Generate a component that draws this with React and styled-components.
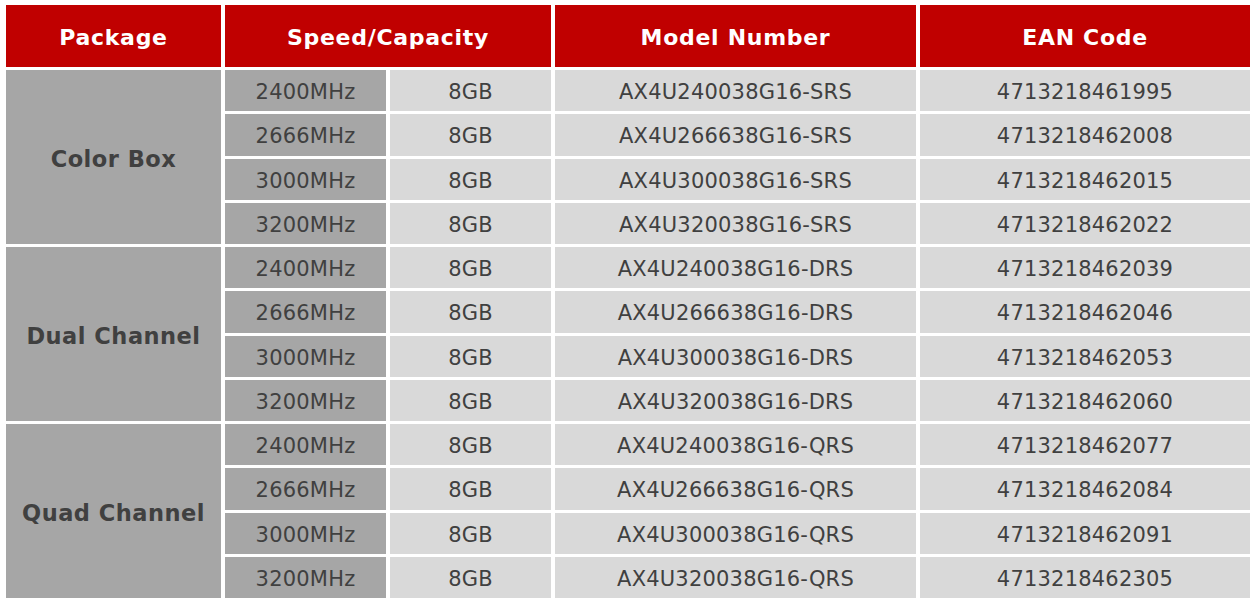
import { Fragment } from "react";
import styled, { createGlobalStyle } from "styled-components";

const GlobalStyle = createGlobalStyle`
  html, body {
    margin: 0;
    padding: 0;
    background: #ffffff;
  }
  body {
    font-family: "DejaVu Sans", Verdana, sans-serif;
  }
`;

const Table = styled.div`
  display: grid;
  grid-template-columns: 215px 161px 161px 361px 330px;
  grid-template-rows: 62px repeat(12, 41.25px);
  column-gap: 4px;
  row-gap: 3px;
  padding: 5px 0 0 6px;
  width: fit-content;
`;

const HeadCell = styled.div`
  grid-column: ${(props) => props.span || "auto"};
  background-color: #c00000;
  color: #ffffff;
  font-size: 22px;
  font-weight: bold;
  letter-spacing: 0.7px;
  display: flex;
  align-items: center;
  justify-content: center;
  padding-top: 2px;
`;

const GroupCell = styled.div`
  grid-row: span 4;
  background-color: #a6a6a6;
  color: #404040;
  font-size: 22.5px;
  font-weight: bold;
  letter-spacing: 0.5px;
  display: flex;
  align-items: center;
  justify-content: center;
  padding-top: 3px;
`;

const Cell = styled.div`
  background-color: ${(props) => (props.dark ? "#a6a6a6" : "#d9d9d9")};
  color: #404040;
  font-size: 21px;
  letter-spacing: 0.2px;
  display: flex;
  align-items: center;
  justify-content: center;
  padding-top: 3px;
`;

const speeds = ["2400", "2666", "3000", "3200"];

const groups = [
  {
    name: "Color Box",
    suffix: "SRS",
    ean: ["4713218461995", "4713218462008", "4713218462015", "4713218462022"],
  },
  {
    name: "Dual Channel",
    suffix: "DRS",
    ean: ["4713218462039", "4713218462046", "4713218462053", "4713218462060"],
  },
  {
    name: "Quad Channel",
    suffix: "QRS",
    ean: ["4713218462077", "4713218462084", "4713218462091", "4713218462305"],
  },
];

export default function App() {
  return (
    <>
      <GlobalStyle />
      <Table>
        <HeadCell>Package</HeadCell>
        <HeadCell span="span 2">Speed/Capacity</HeadCell>
        <HeadCell>Model Number</HeadCell>
        <HeadCell>EAN Code</HeadCell>
        {groups.map((g) =>
          speeds.map((s, i) => (
            <Fragment key={g.name + s}>
              {i === 0 && <GroupCell>{g.name}</GroupCell>}
              <Cell dark>{s}MHz</Cell>
              <Cell>8GB</Cell>
              <Cell>AX4U{s}38G16-{g.suffix}</Cell>
              <Cell>{g.ean[i]}</Cell>
            </Fragment>
          ))
        )}
      </Table>
    </>
  );
}
